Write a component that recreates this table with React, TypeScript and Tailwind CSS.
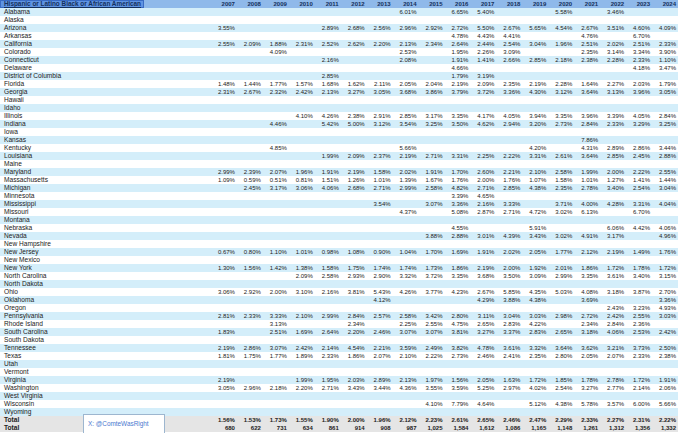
const YEARS = [2007, 2008, 2009, 2010, 2011, 2012, 2013, 2014, 2015, 2016, 2017, 2018, 2019, 2020, 2021, 2022, 2023, 2024];

// year -> value, empty cells left out
const ROWS: [string, Record<number, string>][] = [
  ["Alabama", { 2014: "6.01%", 2016: "6.65%", 2017: "5.40%", 2020: "5.58%", 2022: "3.46%" }],
  ["Alaska", {}],
  ["Arizona", { 2007: "3.55%", 2011: "2.89%", 2012: "2.68%", 2013: "2.56%", 2014: "2.96%", 2015: "2.92%", 2016: "2.72%", 2017: "5.50%", 2018: "2.67%", 2019: "5.65%", 2020: "4.54%", 2021: "2.67%", 2022: "3.51%", 2023: "4.60%", 2024: "4.09%" }],
  ["Arkansas", { 2016: "4.78%", 2017: "4.43%", 2018: "4.41%", 2021: "4.76%", 2023: "6.70%" }],
  ["California", { 2007: "2.55%", 2008: "2.09%", 2009: "1.88%", 2010: "2.31%", 2011: "2.52%", 2012: "2.62%", 2013: "2.20%", 2014: "2.13%", 2015: "2.34%", 2016: "2.64%", 2017: "2.44%", 2018: "2.54%", 2019: "3.04%", 2020: "1.96%", 2021: "2.51%", 2022: "2.02%", 2023: "2.51%", 2024: "2.33%" }],
  ["Colorado", { 2009: "4.09%", 2014: "2.53%", 2016: "1.95%", 2017: "2.26%", 2018: "3.09%", 2021: "2.35%", 2022: "3.14%", 2023: "3.34%", 2024: "3.90%" }],
  ["Connecticut", { 2011: "2.16%", 2014: "2.08%", 2016: "1.91%", 2017: "1.41%", 2018: "2.66%", 2019: "2.85%", 2020: "2.18%", 2021: "2.38%", 2022: "2.28%", 2023: "2.33%", 2024: "1.10%" }],
  ["Delaware", { 2016: "4.66%", 2023: "4.18%", 2024: "3.47%" }],
  ["District of Columbia", { 2011: "2.85%", 2016: "1.79%", 2017: "3.19%" }],
  ["Florida", { 2007: "1.48%", 2008: "1.44%", 2009: "1.77%", 2010: "1.57%", 2011: "1.68%", 2012: "1.62%", 2013: "2.11%", 2014: "2.05%", 2015: "2.04%", 2016: "2.19%", 2017: "2.09%", 2018: "2.35%", 2019: "2.19%", 2020: "2.28%", 2021: "1.64%", 2022: "2.27%", 2023: "2.03%", 2024: "1.79%" }],
  ["Georgia", { 2007: "2.31%", 2008: "2.67%", 2009: "2.32%", 2010: "2.42%", 2011: "2.13%", 2012: "3.27%", 2013: "3.05%", 2014: "3.68%", 2015: "3.86%", 2016: "3.79%", 2017: "3.72%", 2018: "3.36%", 2019: "4.30%", 2020: "3.12%", 2021: "3.64%", 2022: "3.13%", 2023: "3.96%", 2024: "3.05%" }],
  ["Hawaii", {}],
  ["Idaho", {}],
  ["Illinois", { 2010: "4.10%", 2011: "4.26%", 2012: "2.38%", 2013: "2.91%", 2014: "2.85%", 2015: "3.17%", 2016: "3.35%", 2017: "4.17%", 2018: "4.05%", 2019: "3.94%", 2020: "3.35%", 2021: "3.96%", 2022: "3.39%", 2023: "4.05%", 2024: "2.84%" }],
  ["Indiana", { 2009: "4.46%", 2011: "5.42%", 2012: "5.00%", 2013: "3.12%", 2014: "3.54%", 2015: "3.25%", 2016: "3.50%", 2017: "4.62%", 2018: "2.94%", 2019: "3.20%", 2020: "2.73%", 2021: "2.84%", 2022: "2.33%", 2023: "3.29%", 2024: "3.25%" }],
  ["Iowa", {}],
  ["Kansas", { 2021: "7.86%" }],
  ["Kentucky", { 2009: "4.85%", 2014: "5.66%", 2019: "4.20%", 2021: "4.31%", 2022: "2.89%", 2023: "2.86%", 2024: "3.44%" }],
  ["Louisiana", { 2011: "1.99%", 2012: "2.09%", 2013: "2.37%", 2014: "2.19%", 2015: "2.71%", 2016: "3.31%", 2017: "2.25%", 2018: "2.22%", 2019: "3.31%", 2020: "2.61%", 2021: "3.64%", 2022: "2.85%", 2023: "2.45%", 2024: "2.88%" }],
  ["Maine", {}],
  ["Maryland", { 2007: "2.99%", 2008: "2.39%", 2009: "2.07%", 2010: "1.96%", 2011: "1.91%", 2012: "2.19%", 2013: "1.58%", 2014: "2.02%", 2015: "1.91%", 2016: "1.70%", 2017: "2.60%", 2018: "2.21%", 2019: "2.10%", 2020: "2.58%", 2021: "1.99%", 2022: "2.00%", 2023: "2.22%", 2024: "2.55%" }],
  ["Massachusetts", { 2007: "1.09%", 2008: "0.59%", 2009: "0.51%", 2010: "0.81%", 2011: "1.51%", 2012: "1.26%", 2013: "1.01%", 2014: "1.39%", 2015: "1.67%", 2016: "1.76%", 2017: "2.00%", 2018: "1.76%", 2019: "1.07%", 2020: "1.58%", 2021: "1.01%", 2022: "1.27%", 2023: "1.41%", 2024: "1.44%" }],
  ["Michigan", { 2008: "2.45%", 2009: "3.17%", 2010: "3.06%", 2011: "4.06%", 2012: "2.68%", 2013: "2.71%", 2014: "2.99%", 2015: "2.58%", 2016: "4.82%", 2017: "2.71%", 2018: "2.85%", 2019: "4.38%", 2020: "2.35%", 2021: "2.78%", 2022: "3.40%", 2023: "2.54%", 2024: "3.04%" }],
  ["Minnesota", { 2016: "3.39%", 2017: "4.65%" }],
  ["Mississippi", { 2013: "3.54%", 2015: "3.07%", 2016: "3.36%", 2017: "2.16%", 2018: "3.33%", 2020: "3.71%", 2021: "4.00%", 2022: "4.28%", 2023: "3.31%", 2024: "4.04%" }],
  ["Missouri", { 2014: "4.37%", 2016: "5.08%", 2017: "2.87%", 2018: "2.71%", 2019: "4.72%", 2020: "3.02%", 2021: "6.13%", 2023: "6.70%" }],
  ["Montana", {}],
  ["Nebraska", { 2016: "4.55%", 2019: "5.91%", 2022: "6.06%", 2023: "4.42%", 2024: "4.06%" }],
  ["Nevada", { 2015: "3.88%", 2016: "2.88%", 2017: "3.01%", 2018: "4.39%", 2019: "3.43%", 2020: "3.02%", 2021: "4.91%", 2022: "3.17%", 2024: "4.96%" }],
  ["New Hampshire", {}],
  ["New Jersey", { 2007: "0.67%", 2008: "0.80%", 2009: "1.10%", 2010: "1.01%", 2011: "0.98%", 2012: "1.08%", 2013: "0.90%", 2014: "1.04%", 2015: "1.70%", 2016: "1.69%", 2017: "1.91%", 2018: "2.02%", 2019: "2.05%", 2020: "1.77%", 2021: "2.12%", 2022: "2.19%", 2023: "1.49%", 2024: "1.76%" }],
  ["New Mexico", {}],
  ["New York", { 2007: "1.30%", 2008: "1.56%", 2009: "1.42%", 2010: "1.38%", 2011: "1.58%", 2012: "1.75%", 2013: "1.74%", 2014: "1.74%", 2015: "1.73%", 2016: "1.86%", 2017: "2.19%", 2018: "2.00%", 2019: "1.92%", 2020: "2.01%", 2021: "1.86%", 2022: "1.72%", 2023: "1.78%", 2024: "1.72%" }],
  ["North Carolina", { 2010: "2.09%", 2011: "2.58%", 2012: "2.93%", 2013: "2.90%", 2014: "3.32%", 2015: "3.72%", 2016: "3.35%", 2017: "3.68%", 2018: "3.50%", 2019: "3.09%", 2020: "2.99%", 2021: "3.35%", 2022: "3.61%", 2023: "3.40%", 2024: "3.15%" }],
  ["North Dakota", {}],
  ["Ohio", { 2007: "3.06%", 2008: "2.92%", 2009: "2.00%", 2010: "3.10%", 2011: "2.16%", 2012: "3.81%", 2013: "5.43%", 2014: "4.26%", 2015: "3.77%", 2016: "4.23%", 2017: "2.67%", 2018: "5.85%", 2019: "4.35%", 2020: "5.03%", 2021: "4.08%", 2022: "3.18%", 2023: "3.87%", 2024: "2.70%" }],
  ["Oklahoma", { 2013: "4.12%", 2017: "4.29%", 2018: "3.88%", 2019: "4.38%", 2021: "3.69%", 2024: "3.36%" }],
  ["Oregon", { 2022: "2.43%", 2023: "3.23%", 2024: "4.93%" }],
  ["Pennsylvania", { 2007: "2.81%", 2008: "2.33%", 2009: "3.33%", 2010: "2.10%", 2011: "2.99%", 2012: "2.84%", 2013: "2.57%", 2014: "2.58%", 2015: "3.42%", 2016: "2.80%", 2017: "3.11%", 2018: "3.04%", 2019: "3.03%", 2020: "2.98%", 2021: "2.72%", 2022: "2.42%", 2023: "2.55%", 2024: "3.03%" }],
  ["Rhode Island", { 2009: "3.13%", 2012: "2.34%", 2014: "2.25%", 2015: "2.55%", 2016: "4.75%", 2017: "2.65%", 2018: "2.83%", 2019: "4.22%", 2021: "2.34%", 2022: "2.84%", 2023: "2.36%" }],
  ["South Carolina", { 2007: "1.83%", 2009: "2.51%", 2010: "1.69%", 2011: "2.64%", 2012: "2.20%", 2013: "2.46%", 2014: "3.07%", 2015: "3.07%", 2016: "3.81%", 2017: "3.27%", 2018: "3.37%", 2019: "2.83%", 2020: "2.65%", 2021: "3.18%", 2022: "4.06%", 2023: "2.53%", 2024: "2.42%" }],
  ["South Dakota", {}],
  ["Tennessee", { 2007: "2.19%", 2008: "2.86%", 2009: "3.07%", 2010: "2.42%", 2011: "2.14%", 2012: "4.54%", 2013: "2.21%", 2014: "3.59%", 2015: "2.49%", 2016: "3.82%", 2017: "4.78%", 2018: "3.61%", 2019: "3.32%", 2020: "3.64%", 2021: "3.62%", 2022: "3.21%", 2023: "3.73%", 2024: "2.50%" }],
  ["Texas", { 2007: "1.81%", 2008: "1.75%", 2009: "1.77%", 2010: "1.89%", 2011: "2.33%", 2012: "1.86%", 2013: "2.07%", 2014: "2.10%", 2015: "2.22%", 2016: "2.73%", 2017: "2.46%", 2018: "2.41%", 2019: "2.35%", 2020: "2.80%", 2021: "2.05%", 2022: "2.07%", 2023: "2.33%", 2024: "2.38%" }],
  ["Utah", {}],
  ["Vermont", {}],
  ["Virginia", { 2007: "2.19%", 2010: "1.99%", 2011: "1.95%", 2012: "2.03%", 2013: "2.89%", 2014: "2.13%", 2015: "1.97%", 2016: "1.56%", 2017: "2.05%", 2018: "1.63%", 2019: "1.72%", 2020: "1.85%", 2021: "1.78%", 2022: "2.78%", 2023: "1.72%", 2024: "1.91%" }],
  ["Washington", { 2007: "3.05%", 2008: "2.96%", 2009: "2.18%", 2010: "2.20%", 2011: "2.71%", 2012: "3.43%", 2013: "3.44%", 2014: "4.36%", 2015: "3.55%", 2016: "3.59%", 2017: "5.25%", 2018: "2.97%", 2019: "4.02%", 2020: "2.54%", 2021: "3.27%", 2022: "2.77%", 2023: "2.14%", 2024: "2.06%" }],
  ["West Virginia", {}],
  ["Wisconsin", { 2015: "4.10%", 2016: "7.79%", 2017: "4.64%", 2019: "5.12%", 2020: "4.38%", 2021: "5.78%", 2022: "3.57%", 2023: "6.00%", 2024: "5.66%" }],
  ["Wyoming", {}],
];

const TOTAL_PCT = ["1.56%", "1.53%", "1.73%", "1.55%", "1.90%", "2.00%", "1.96%", "2.12%", "2.23%", "2.61%", "2.65%", "2.46%", "2.47%", "2.29%", "2.33%", "2.27%", "2.31%", "2.22%"];
const TOTAL_N = ["680", "622", "731", "634", "861", "914", "908", "987", "1,025", "1,584", "1,612", "1,086", "1,165", "1,148", "1,261", "1,312", "1,356", "1,332"];

const grid = "grid grid-cols-[211px_repeat(18,minmax(0,1fr))] h-[8px] leading-[8px]";

function Row({ label, values, shade }: { label: string; values: string[]; shade: string }) {
  return (
    <div className={`${grid} ${shade}`}>
      <div className="pl-[4px] text-[6.6px] whitespace-nowrap">{label}</div>
      {values.map((v, i) => (
        <div key={i} className="text-right pr-[2px] text-[6px] whitespace-nowrap">
          {v}
        </div>
      ))}
    </div>
  );
}

export default function App() {
  return (
    <div className="relative w-[680px] h-[433px] overflow-hidden bg-white pr-[2px] text-[#222] font-['Liberation_Sans',Arial,sans-serif]">
      <div className={`${grid} bg-[#8fb9ea] font-bold text-[#14305c]`}>
        <div className="flex">
          <div className="bg-[#5f94e3] border border-[#3a6cc4] pl-[3px] pr-[2px] text-[6.4px] leading-[6px] underline whitespace-nowrap">
            Hispanic or Latino Black or African American
          </div>
        </div>
        {YEARS.map(y => (
          <div key={y} className="text-right pr-[2px] text-[6px]">
            {y}
          </div>
        ))}
      </div>

      {ROWS.map(([label, vals], i) => (
        <Row
          key={label}
          label={label}
          values={YEARS.map(y => vals[y] ?? "")}
          shade={i % 2 === 0 ? "bg-[#d4eefa]" : "bg-white"}
        />
      ))}

      <div className="font-bold">
        <Row label="Total" values={TOTAL_PCT} shade="bg-[#e5e5e5]" />
        <Row label="Total" values={TOTAL_N} shade="bg-[#e5e5e5]" />
      </div>

      <div className="absolute left-[83px] top-[414px] w-[82px] h-[20px] bg-white border border-[#9db6cf] pl-[4px] pt-[5px] text-[6.4px] leading-[7px] text-[#4b79cf]">
        X: @ComteWasRight
      </div>
    </div>
  );
}
